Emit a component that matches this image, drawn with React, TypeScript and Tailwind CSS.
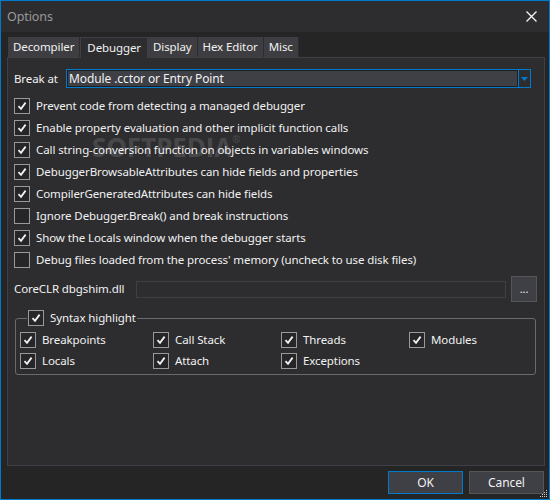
import React from "react";

// 체크박스 한 줄
const Check = ({
  checked,
  label,
  h = "h-[22px]",
}: {
  checked: boolean;
  label: string;
  h?: string;
}) => (
  <div className={`flex items-center ${h}`}>
    <span className="w-[16px] h-[16px] border border-[#999999] bg-[#262628] flex items-center justify-center shrink-0">
      {checked && (
        <svg width="10" height="10" viewBox="0 0 10 10">
          <path d="M1.5 5.2 L4 7.8 L8.6 1.6" stroke="#f1f1f1" strokeWidth="1.8" fill="none" />
        </svg>
      )}
    </span>
    <span className="ml-[6px] whitespace-nowrap">{label}</span>
  </div>
);

const tabs = ["Decompiler", "Debugger", "Display", "Hex Editor", "Misc"];

const options: [boolean, string][] = [
  [true, "Prevent code from detecting a managed debugger"],
  [true, "Enable property evaluation and other implicit function calls"],
  [true, "Call string-conversion function on objects in variables windows"],
  [true, "DebuggerBrowsableAttributes can hide fields and properties"],
  [true, "CompilerGeneratedAttributes can hide fields"],
  [false, "Ignore Debugger.Break() and break instructions"],
  [true, "Show the Locals window when the debugger starts"],
  [false, "Debug files loaded from the process' memory (uncheck to use disk files)"],
];

const highlight: string[] = [
  "Breakpoints",
  "Call Stack",
  "Threads",
  "Modules",
  "Locals",
  "Attach",
  "Exceptions",
];

export default function App() {
  return (
    <div className="relative w-[550px] h-[500px] border border-[#007acc] bg-[#252526] flex flex-col text-[#f1f1f1] text-[11.5px] tracking-[-0.1px] font-['Noto_Sans',sans-serif] overflow-hidden">
      {/* 타이틀 바 */}
      <div className="h-[31px] bg-[#2d2d30] flex items-center justify-between pl-[6px] pr-[12px] shrink-0">
        <span className="text-[#999999] text-[12.5px] mt-[1px]">Options</span>
        <svg width="11" height="11" viewBox="0 0 11 11">
          <path d="M0.5 0.5 L10.5 10.5 M10.5 0.5 L0.5 10.5" stroke="#f1f1f1" strokeWidth="1.4" />
        </svg>
      </div>

      {/* 탭 */}
      <div className="flex items-end pl-[7px] mt-[4px] h-[21px] shrink-0">
        {tabs.map((t) =>
          t === "Debugger" ? (
            <div
              key={t}
              className="h-[21px] px-[6px] bg-[#2d2d30] border border-b-0 border-[#3f3f46] flex items-center mb-[-1px] relative z-10"
            >
              {t}
            </div>
          ) : (
            <div
              key={t}
              className="h-[20px] px-[5px] bg-[#3e3e42] border-r border-[#2d2d30] flex items-center"
            >
              {t}
            </div>
          )
        )}
      </div>

      {/* 패널 */}
      <div className="relative ml-[6px] mr-[4px] h-[409px] bg-[#2d2d30] border border-[#3f3f46] flex flex-col px-[6px] shrink-0">
        <div className="flex items-center mt-[11px] h-[19px]">
          <span className="w-[52px]">Break at</span>
          <div className="flex flex-1 mr-[7px] h-[19px] border border-[#007acc]">
            <div className="flex-1 bg-[#3f3f46] border border-[#1e1e1e] flex items-center pl-[1px] text-[12px]">
              Module .cctor or Entry Point
            </div>
            <div className="w-[12px] border-l border-[#007acc] flex items-center justify-center">
              <svg width="7" height="4" viewBox="0 0 7 4">
                <path d="M0 0 H7 L3.5 4 Z" fill="#007acc" />
              </svg>
            </div>
          </div>
        </div>

        <div className="flex flex-col mt-[7px]">
          {options.map(([c, l]) => (
            <Check key={l} checked={c} label={l} />
          ))}
        </div>

        <div className="flex items-center mt-[5px] h-[26px]">
          <span className="w-[122px]">CoreCLR dbgshim.dll</span>
          <div className="flex-1 h-[17px] bg-[#2d2d30] border border-[#3f3f46]" />
          <div className="ml-[5px] mr-[1px] w-[26px] h-[26px] bg-[#3f3f46] border border-[#555555] flex items-center justify-center text-[11px]">
            ...
          </div>
        </div>

        <fieldset className="mt-[5px] ml-[1px] mr-[2px] border border-[#6a6a6a] rounded-[3px] pl-[4px] pr-[4px] pb-[3px]">
          <legend className="ml-[7px] px-[1px] flex items-center">
            <Check checked={true} label="Syntax highlight" />
          </legend>
          <div className="grid grid-cols-[133px_128px_128px_1fr]">
            {highlight.map((h) => (
              <Check key={h} checked={true} label={h} h="h-[21px]" />
            ))}
          </div>
        </fieldset>

        {/* 워터마크 */}
        <div className="absolute left-[84px] top-[76px] leading-none text-[26px] font-bold text-white/15 font-['Open_Sans',sans-serif] pointer-events-none">
          SOFTPEDIA<span className="text-[10px] align-top">®</span>
        </div>
      </div>

      {/* 하단 버튼 */}
      <div className="flex justify-end gap-[6px] mt-[5px] mr-[5px]">
        <button className="w-[75px] h-[23px] bg-[#3f3f46] border border-[#007acc] text-[12px]">OK</button>
        <button className="w-[75px] h-[23px] bg-[#3f3f46] border border-[#555555] text-[12px]">Cancel</button>
      </div>

      <svg className="absolute right-[1px] bottom-[1px]" width="9" height="9" viewBox="0 0 9 9">
        <rect x="7" y="1" width="1" height="1" fill="#cccccc" />
        <rect x="5" y="3" width="1" height="1" fill="#cccccc" />
        <rect x="7" y="3" width="1" height="1" fill="#cccccc" />
        <rect x="3" y="5" width="1" height="1" fill="#cccccc" />
        <rect x="5" y="5" width="1" height="1" fill="#cccccc" />
        <rect x="7" y="5" width="1" height="1" fill="#cccccc" />
        <rect x="1" y="7" width="1" height="1" fill="#cccccc" />
        <rect x="3" y="7" width="1" height="1" fill="#cccccc" />
        <rect x="5" y="7" width="1" height="1" fill="#cccccc" />
        <rect x="7" y="7" width="1" height="1" fill="#cccccc" />
      </svg>
    </div>
  );
}
